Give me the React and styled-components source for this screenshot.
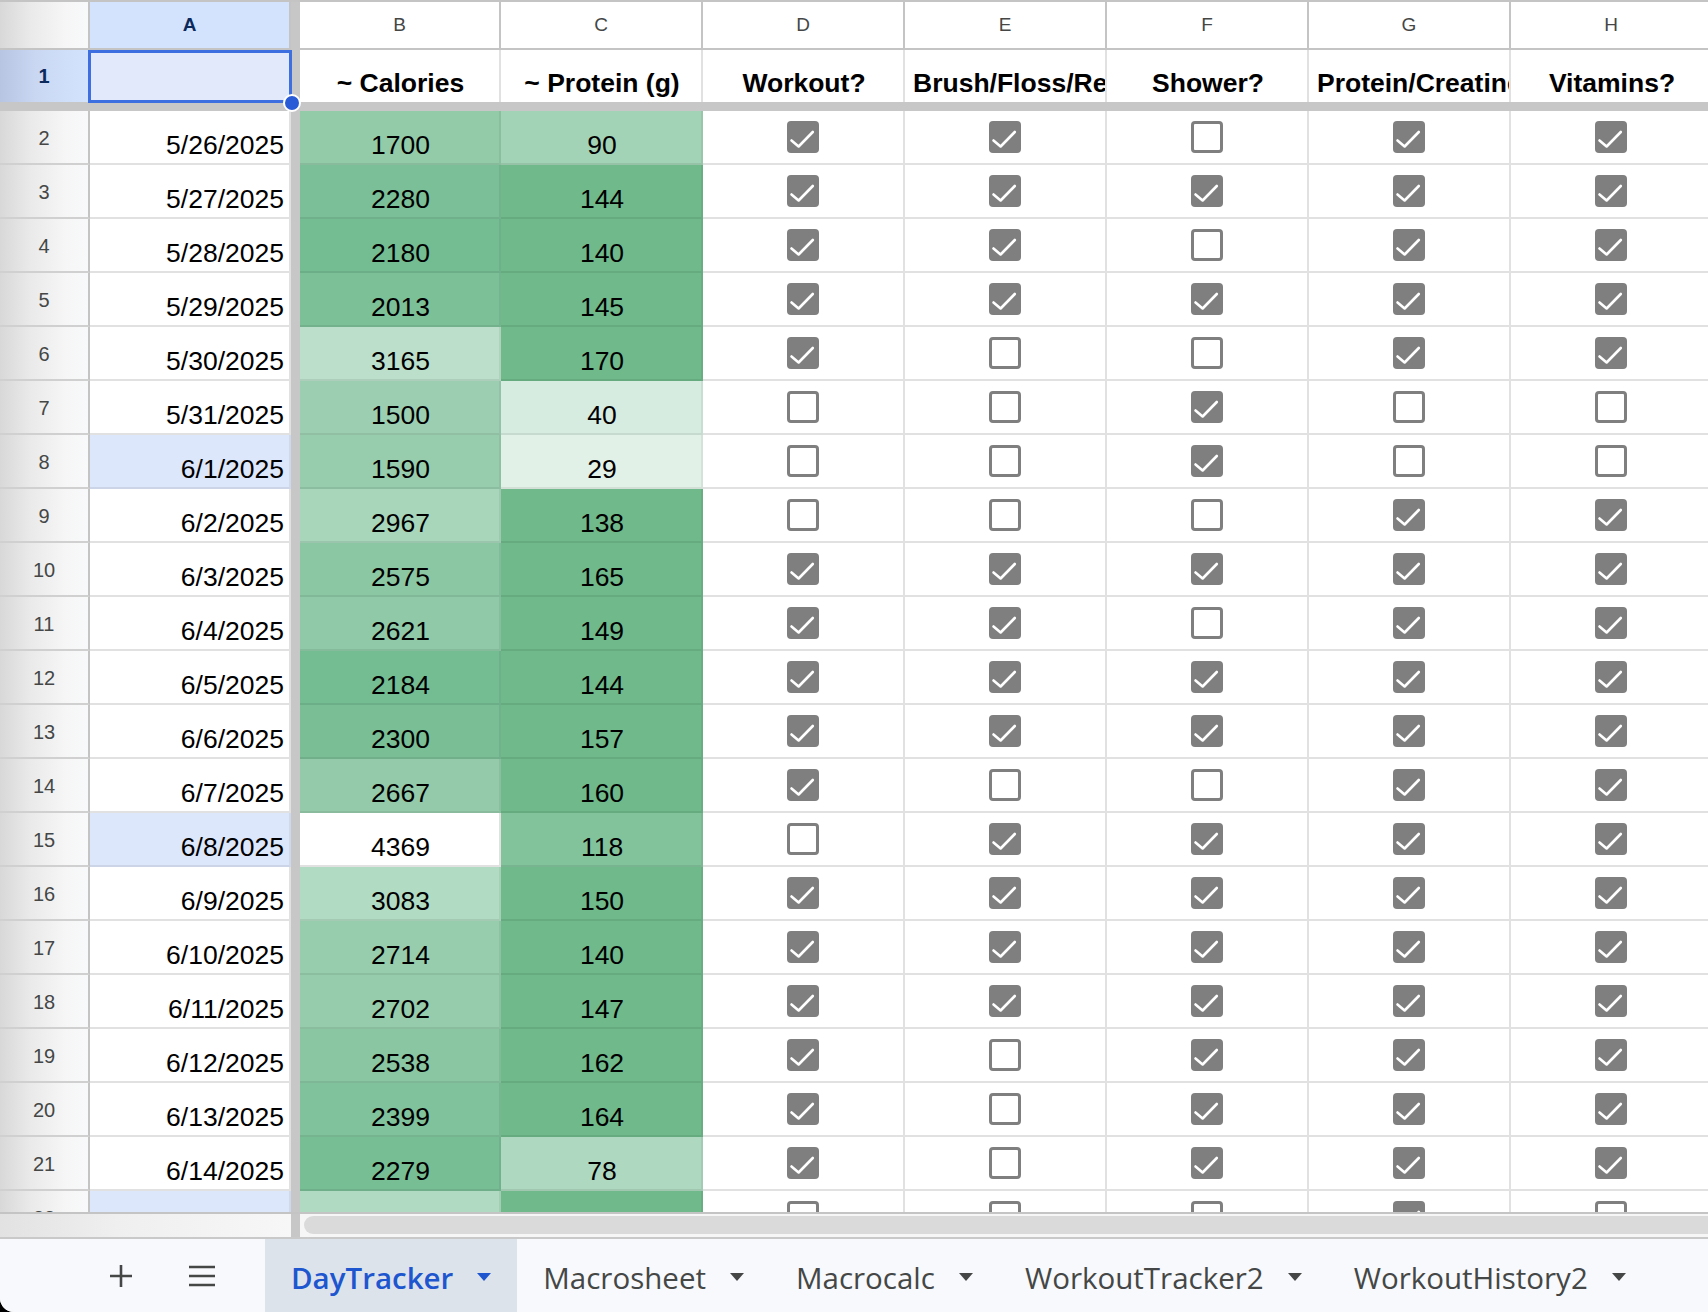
import React from 'react';
import styled, { createGlobalStyle } from 'styled-components';

const GlobalStyle = createGlobalStyle`
  html, body {
    margin: 0;
    padding: 0;
    background: #000;
  }
  * {
    box-sizing: border-box;
  }
`;

const CELL_FONT = `"Liberation Sans", Arial, sans-serif`;
const TAB_FONT = `"Open Sans", "Noto Sans", sans-serif`;
const DARK = '#6fb98b';

// date, calories, cal colour, protein, protein colour, checks D-H, blue date cell
const rows = [
  ['5/26/2025', 1700, '#93cba8', 90, '#a3d3b6', [1, 1, 0, 1, 1]],
  ['5/27/2025', 2280, '#7abf97', 144, DARK, [1, 1, 1, 1, 1]],
  ['5/28/2025', 2180, '#74bc92', 140, DARK, [1, 1, 0, 1, 1]],
  ['5/29/2025', 2013, '#7cc098', 145, DARK, [1, 1, 1, 1, 1]],
  ['5/30/2025', 3165, '#bbdfca', 170, DARK, [1, 0, 0, 1, 1]],
  ['5/31/2025', 1500, '#9ccfb2', 40, '#d6ece0', [0, 0, 1, 0, 0]],
  ['6/1/2025', 1590, '#97cdad', 29, '#e2f1e8', [0, 0, 1, 0, 0], true],
  ['6/2/2025', 2967, '#a8d6bb', 138, DARK, [0, 0, 0, 1, 1]],
  ['6/3/2025', 2575, '#8cc7a4', 165, DARK, [1, 1, 1, 1, 1]],
  ['6/4/2025', 2621, '#90c9a7', 149, DARK, [1, 1, 0, 1, 1]],
  ['6/5/2025', 2184, '#74bc92', 144, DARK, [1, 1, 1, 1, 1]],
  ['6/6/2025', 2300, '#79be95', 157, DARK, [1, 1, 1, 1, 1]],
  ['6/7/2025', 2667, '#94caa9', 160, DARK, [1, 0, 0, 1, 1]],
  ['6/8/2025', 4369, '#ffffff', 118, '#82c39c', [0, 1, 1, 1, 1], true],
  ['6/9/2025', 3083, '#b2dbc3', 150, DARK, [1, 1, 1, 1, 1]],
  ['6/10/2025', 2714, '#97cdac', 140, DARK, [1, 1, 1, 1, 1]],
  ['6/11/2025', 2702, '#96ccab', 147, DARK, [1, 1, 1, 1, 1]],
  ['6/12/2025', 2538, '#89c6a1', 162, DARK, [1, 0, 1, 1, 1]],
  ['6/13/2025', 2399, '#80c29b', 164, DARK, [1, 0, 1, 1, 1]],
  ['6/14/2025', 2279, '#78be95', 78, '#aed8bf', [1, 0, 1, 1, 1]],
  ['', '', '#b0dac2', '', DARK, [0, 0, 0, 1, 0], true],
];

const headers = [
  { text: '~ Calories' },
  { text: '~ Protein (g)' },
  { text: 'Workout?' },
  { text: 'Brush/Floss/Retainer?', clip: true },
  { text: 'Shower?' },
  { text: 'Protein/Creatine?', clip: true },
  { text: 'Vitamins?' },
];

const letters = ['B', 'C', 'D', 'E', 'F', 'G', 'H'];
const tabs = ['DayTracker', 'Macrosheet', 'Macrocalc', 'WorkoutTracker2', 'WorkoutHistory2'];

const Window = styled.div`
  width: 1708px;
  height: 1312px;
  display: flex;
  flex-direction: column;
  background: #fff;
  overflow: hidden;
  border-bottom-left-radius: 14px;
  font-family: ${CELL_FONT};
`;

const SheetArea = styled.div`
  height: 1214px;
  flex-shrink: 0;
  overflow: hidden;
  border-bottom: 2px solid #c4c4c4;
`;

const GridRow = styled.div`
  display: grid;
  grid-template-columns: 90px 201px 9px 201px repeat(6, 202px);
  height: ${p => p.$h}px;
  ${p => p.$top && 'border-top: 2px solid #c4c4c4;'}
`;

const gutterBg = `linear-gradient(90deg, #d8d8d8 0%, #eaeaea 35%, #f6f6f7 75%, #f8f9fa 100%)`;

const Corner = styled.div`
  background: ${gutterBg};
  border-right: 2px solid #c4c4c4;
  border-bottom: 2px solid #c4c4c4;
`;

const ColLetter = styled.div`
  display: flex;
  align-items: center;
  justify-content: center;
  font-size: 19px;
  font-weight: ${p => (p.$selected ? 700 : 400)};
  color: ${p => (p.$selected ? '#0b2a5b' : '#444746')};
  background: ${p => (p.$selected ? '#d3e3fd' : '#fff')};
  border-right: 2px solid #c4c4c4;
  border-bottom: 2px solid #c4c4c4;
`;

const FrozenBar = styled.div`
  background: #c7c7c7;
`;

const FrozenDivider = styled.div`
  height: 9px;
  background: #c7c7c7;
`;

const RowNum = styled.div`
  display: flex;
  align-items: center;
  justify-content: center;
  padding-top: ${p => (p.$selected ? 0 : 2)}px;
  font-size: 20px;
  font-weight: ${p => (p.$selected ? 700 : 400)};
  color: ${p => (p.$selected ? '#0b2a5b' : '#444746')};
  background: ${p =>
    p.$selected
      ? 'linear-gradient(90deg, #b7c4e2 0%, #c9d7f3 40%, #d3e3fd 100%)'
      : gutterBg};
  border-right: 2px solid #c4c4c4;
  border-bottom: ${p => (p.$last ? 'none' : '2px solid #d0d0d0')};
`;

const isTinted = bg => bg && bg !== '#fff' && bg !== '#ffffff';

const Cell = styled.div`
  display: flex;
  align-items: flex-end;
  justify-content: ${p => p.$align || 'center'};
  padding: 0 5px 5px 7px;
  font-size: 26.5px;
  line-height: 1;
  color: #000;
  white-space: nowrap;
  overflow: hidden;
  background: ${p => p.$bg || '#fff'};
  border-right: 2px solid ${p => (isTinted(p.$bg) ? 'rgba(0,0,0,0.06)' : '#e1e1e1')};
  border-bottom: 2px solid ${p => (isTinted(p.$bg) ? 'rgba(0,0,0,0.07)' : '#e1e1e1')};
`;

const HeadCell = styled(Cell)`
  font-weight: 700;
  border-bottom: none;
  justify-content: ${p => (p.$clip ? 'flex-start' : 'center')};
  padding-left: ${p => (p.$clip ? 8 : 7)}px;
  padding-bottom: 6px;
`;

const SelectedCell = styled(Cell)`
  position: relative;
  overflow: visible;
  background: #e1e9fb;
  border-bottom: none;
  border-right: none;
`;

const SelectionFrame = styled.div`
  position: absolute;
  top: 0;
  left: -2px;
  right: -1px;
  bottom: -1px;
  border: 3px solid #3d6fe0;
  pointer-events: none;
`;

const Handle = styled.div`
  position: absolute;
  right: -10px;
  bottom: -10px;
  width: 18px;
  height: 18px;
  border-radius: 50%;
  background: #2a5bd7;
  border: 2px solid #fff;
  z-index: 3;
`;

const CheckCell = styled.div`
  display: flex;
  align-items: center;
  justify-content: center;
  background: #fff;
  border-right: 2px solid #e1e1e1;
  border-bottom: 2px solid #e1e1e1;
`;

const Box = styled.div`
  width: 32px;
  height: 32px;
  border-radius: 4px;
  background: ${p => (p.$checked ? '#7f7f7f' : '#fff')};
  border: ${p => (p.$checked ? 'none' : '3px solid #7f7f7f')};
  display: flex;
  align-items: center;
  justify-content: center;
`;

const Checkbox = ({ checked }) => (
  <Box $checked={checked}>
    {checked && (
      <svg width="32" height="32" viewBox="0 0 32 32">
        <polyline
          points="4.5,19.5 11.6,25.5 25.8,11"
          fill="none"
          stroke="#fff"
          strokeWidth="2.6"
          strokeLinecap="round"
          strokeLinejoin="round"
        />
      </svg>
    )}
  </Box>
);

const ScrollRow = styled.div`
  height: 25px;
  flex-shrink: 0;
  display: grid;
  grid-template-columns: 291px 9px 1fr;
  border-bottom: 2px solid #c9c9c9;
`;

const ScrollGutter = styled.div`
  background: linear-gradient(90deg, #e2e2e2 0%, #efefef 40%, #f7f7f7 100%);
`;

const ScrollTrack = styled.div`
  background: #f6f6f6;
  padding: 2px 0 3px 4px;
  display: flex;
`;

const Thumb = styled.div`
  flex: 1;
  background: #dadada;
  border-radius: 9px 0 0 9px;
`;

const TabBar = styled.div`
  flex: 1;
  display: flex;
  align-items: stretch;
  padding-left: 80px;
  background: #f8f9fc;
`;

const IconButton = styled.div`
  width: 81px;
  display: flex;
  align-items: center;
  justify-content: center;
`;

const Tabs = styled.div`
  display: flex;
  margin-left: 23px;
`;

const Tab = styled.div`
  display: flex;
  align-items: center;
  gap: 24px;
  padding: 3px 26px 0 26px;
  background: ${p => (p.$active ? '#dde3ea' : 'transparent')};
  color: ${p => (p.$active ? '#1d56cf' : '#444746')};
  font-family: ${TAB_FONT};
  font-size: 29.5px;
  font-weight: ${p => (p.$active ? 600 : 400)};
  white-space: nowrap;
`;

const Caret = ({ color }) => (
  <svg width="14" height="8" viewBox="0 0 14 8">
    <path d="M0 0 L14 0 L7 8 Z" fill={color} />
  </svg>
);

const PlusIcon = () => (
  <svg width="24" height="24" viewBox="0 0 24 24">
    <path d="M12 1 V23 M1 12 H23" stroke="#444746" strokeWidth="2.6" fill="none" />
  </svg>
);

const MenuIcon = () => (
  <svg width="28" height="22" viewBox="0 0 28 22">
    <path d="M1 2 H27 M1 11 H27 M1 20 H27" stroke="#444746" strokeWidth="2.6" fill="none" />
  </svg>
);

const App = () => {
  return (
    <>
      <GlobalStyle />
      <Window>
        <SheetArea>
          <GridRow $h={50} $top>
            <Corner />
            <ColLetter $selected>A</ColLetter>
            <FrozenBar />
            {letters.map(l => (
              <ColLetter key={l}>{l}</ColLetter>
            ))}
          </GridRow>

          <GridRow $h={52}>
            <RowNum $selected $last>1</RowNum>
            <SelectedCell>
              <SelectionFrame />
              <Handle />
            </SelectedCell>
            <FrozenBar />
            {headers.map(h => (
              <HeadCell key={h.text} $clip={h.clip}>{h.text}</HeadCell>
            ))}
          </GridRow>

          <FrozenDivider />

          {rows.map((r, i) => {
            const [date, cal, calBg, pro, proBg, checks, blue] = r;
            return (
              <GridRow key={i} $h={54}>
                <RowNum>{i + 2}</RowNum>
                <Cell $align="flex-end" $bg={blue ? '#dde7fb' : '#fff'}>{date}</Cell>
                <FrozenBar />
                <Cell $bg={calBg}>{cal}</Cell>
                <Cell $bg={proBg}>{pro}</Cell>
                {checks.map((c, j) => (
                  <CheckCell key={j}>
                    <Checkbox checked={!!c} />
                  </CheckCell>
                ))}
              </GridRow>
            );
          })}
        </SheetArea>

        <ScrollRow>
          <ScrollGutter />
          <FrozenBar />
          <ScrollTrack>
            <Thumb />
          </ScrollTrack>
        </ScrollRow>

        <TabBar>
          <IconButton><PlusIcon /></IconButton>
          <IconButton><MenuIcon /></IconButton>
          <Tabs>
            {tabs.map((t, i) => (
              <Tab key={t} $active={i === 0}>
                {t}
                <Caret color={i === 0 ? '#1d56cf' : '#444746'} />
              </Tab>
            ))}
          </Tabs>
        </TabBar>
      </Window>
    </>
  );
};

export default App;
